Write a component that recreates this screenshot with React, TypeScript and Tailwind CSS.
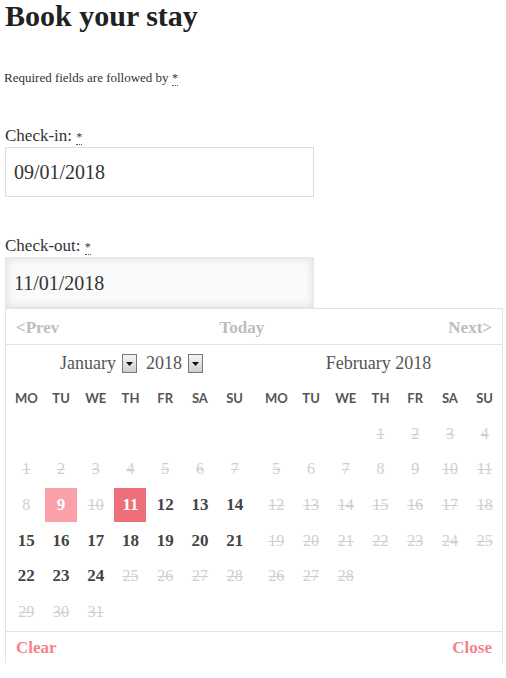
import React from "react";

type Cell = null | { d: number; k: "s" | "l" | "b" | "r" | "e" };

const serif = "font-['Liberation_Serif',serif]";

function row(spec: string): Cell[] {
  // spec like "_ _ s1 l2 b3"
  return spec.split(" ").map((t) => {
    if (t === "_") return null;
    return { k: t[0] as "s" | "l" | "b" | "r" | "e", d: parseInt(t.slice(1), 10) };
  });
}

const january: Cell[][] = [
  row("_ _ _ _ _ _ _"),
  row("s1 s2 s3 s4 s5 s6 s7"),
  row("l8 r9 s10 e11 b12 b13 b14"),
  row("b15 b16 b17 b18 b19 b20 b21"),
  row("b22 b23 b24 s25 s26 s27 s28"),
  row("s29 s30 s31 _ _ _ _"),
];

const february: Cell[][] = [
  row("_ _ _ s1 s2 s3 s4"),
  row("s5 l6 s7 l8 s9 s10 s11"),
  row("s12 s13 s14 s15 s16 s17 s18"),
  row("s19 s20 s21 s22 s23 s24 s25"),
  row("s26 s27 s28 _ _ _ _"),
  row("_ _ _ _ _ _ _"),
];

const dayNames = ["MO", "TU", "WE", "TH", "FR", "SA", "SU"];

function Req() {
  return (
    <abbr className="no-underline border-b border-dotted border-[#555] text-[12px] leading-none cursor-help" title="required">
      *
    </abbr>
  );
}

function DayCell({ cell }: { cell: Cell }) {
  if (!cell) return <div className="h-[35.6px]" />;
  let cls = "";
  if (cell.k === "s") cls = "text-[16px] text-[#cfcfcf] line-through";
  if (cell.k === "l") cls = "text-[16px] text-[#cfcfcf]";
  if (cell.k === "b") cls = "text-[17px] font-bold text-[#444]";
  if (cell.k === "r") cls = "text-[17px] font-bold text-white bg-[#f9a0a8] w-[32px] h-[34px]";
  if (cell.k === "e") cls = "text-[17px] font-bold text-white bg-[#ee6f79] w-[32px] h-[34px]";
  return (
    <div className="h-[35.6px] flex items-center justify-center">
      <span className={`flex items-center justify-center ${cls}`}>{cell.d}</span>
    </div>
  );
}

function SelectBox() {
  return (
    <span className="inline-flex items-center justify-center w-[15px] h-[19px] border border-[#777] bg-gradient-to-b from-[#f4f4f4] to-[#cfcfcf]">
      <svg width="7" height="4" viewBox="0 0 7 4">
        <path d="M0 0h7L3.5 4z" fill="#111" />
      </svg>
    </span>
  );
}

function Month({ title, weeks }: { title: React.ReactNode; weeks: Cell[][] }) {
  return (
    <div className="w-[243px]">
      <div className={`h-[36px] pt-[1px] flex items-center justify-center text-[18px] text-[#555] ${serif}`}>{title}</div>
      <div className="grid grid-cols-7 h-[35px] items-center font-['Lato',sans-serif] font-bold text-[13px] text-[#555]">
        {dayNames.map((n) => (
          <div key={n} className="text-center">
            {n}
          </div>
        ))}
      </div>
      <div className={`grid grid-cols-7 ${serif}`}>
        {weeks.flat().map((c, i) => (
          <DayCell key={i} cell={c} />
        ))}
      </div>
    </div>
  );
}

export default function App() {
  return (
    <div className={`w-[506px] h-[678px] bg-white overflow-hidden text-[#333] ${serif}`}>
      <h1 className="pl-[5px] pt-[1px] text-[30px] leading-[30px] font-bold text-[#222]">Book your stay</h1>

      <p className="pl-[4px] mt-[39px] text-[13px] leading-[16px] text-[#333]">
        Required fields are followed by <Req />
      </p>

      <label className="block pl-[5px] mt-[40px] text-[17px] leading-[20px]">
        Check-in: <Req />
      </label>
      <div className="ml-[5px] mt-[1px] w-[309px] h-[50px] border border-[#dcdcdc] flex items-center pl-[8px] text-[20px] text-[#333]">
        09/01/2018
      </div>

      <label className="block pl-[5px] mt-[39px] text-[17px] leading-[20px]">
        Check-out: <Req />
      </label>
      <div className="ml-[5px] mt-[1px] w-[309px] h-[51px] border border-[#e6e6e6] bg-[#fafafa] shadow-[inset_0_0_10px_rgba(0,0,0,0.12)] flex items-center pl-[8px] text-[20px] text-[#333]">
        11/01/2018
      </div>

      <div className="ml-[5px] w-[498px] border border-b-0 border-[#e3e3e3] h-[355px] flex flex-col">
        <div className="h-[36px] pt-[3px] border-b border-[#e3e3e3] flex items-center justify-between px-[10px] text-[17px] font-bold text-[#bdbdbd]">
          <span>&lt;Prev</span>
          <span className="mr-[24px]">Today</span>
          <span>Next&gt;</span>
        </div>
        <div className="flex pl-[3px] gap-[7px]">
          <Month
            title={
              <span className="flex items-center gap-[6px] pl-[2px]">
                <span>January</span>
                <SelectBox />
                <span className="ml-[3px]">2018</span>
                <SelectBox />
              </span>
            }
            weeks={january}
          />
          <Month title={<span className="pr-[4px]">February 2018</span>} weeks={february} />
        </div>
        <div className="mt-[1px] border-t border-[#e3e3e3] flex items-center justify-between px-[10px] h-[32px] pt-[2px] text-[17px] font-bold text-[#f4838d]">
          <span>Clear</span>
          <span>Close</span>
        </div>
      </div>
    </div>
  );
}
